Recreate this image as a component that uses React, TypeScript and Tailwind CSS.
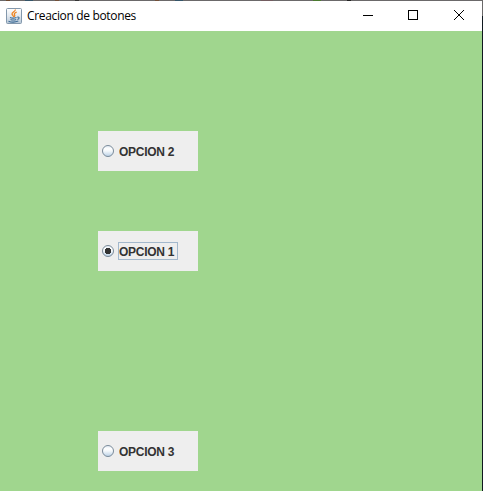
import React from "react";

function JavaIcon() {
  return (
    <svg width="16" height="16" viewBox="0 0 16 16" className="shrink-0">
      <defs>
        <linearGradient id="tile" x1="0" y1="0" x2="0" y2="1">
          <stop offset="0" stopColor="#ffffff" />
          <stop offset="0.5" stopColor="#e3e9ef" />
          <stop offset="1" stopColor="#b4c5d5" />
        </linearGradient>
      </defs>
      <rect x="0.5" y="0.5" width="15" height="15" rx="1" fill="url(#tile)" stroke="#8398ac" />
      <path d="M9.300 1.500c.4 2-3.700 2.500-3.300 4.700.2 1 1.500 1.400 1.700 2.600M10.700 4C8.700 4.900 7.700 5.800 8.600 6.900c.5.700.2 1.300-.4 1.900" fill="none" stroke="#ee8422" strokeWidth="1.300" />
      <path d="M4 9.500c1.500.7 4.500.7 6.500 0M4.500 11.400c1.700.7 4 .7 5.700 0M2.500 13.200c2.800 1.100 7 1 9.800-.2M11.200 9.200c2.500-.8 2.500 1.700.2 2.300" fill="none" stroke="#3f6d97" strokeWidth="1.100" />
    </svg>
  );
}

function Radio({ checked, id }: { checked: boolean; id: string }) {
  return (
    <svg width="12" height="12" viewBox="0 0 12 12" className="shrink-0">
      <defs>
        <linearGradient id={id} x1="0" y1="0" x2="0" y2="1">
          <stop offset="0" stopColor="#dfe9f3" />
          <stop offset="0.3" stopColor="#ffffff" />
          <stop offset="0.5" stopColor="#f4f8fb" />
          <stop offset="1" stopColor="#b8cfe5" />
        </linearGradient>
      </defs>
      <circle cx="6" cy="6" r="5.5" fill={`url(#${id})`} stroke="#7a8a99" />
      {checked && <path d="M4 3h4v1h1v4H8v1H4V8H3V4h1z" fill="#333333" />}
    </svg>
  );
}

function Option({ label, checked = false, id }: { label: string; checked?: boolean; id: string }) {
  return (
    <div className="flex h-10 w-[100px] items-center bg-[#eeeeee] pl-1">
      <Radio checked={checked} id={id} />
      <span
        className={`ml-1 flex h-[18px] w-[60px] items-center border whitespace-nowrap text-[12px] leading-[16px] font-bold text-[#333333] ${
          checked ? "border-[#a3b8cc]" : "border-transparent"
        }`}
      >
        <span className="pt-px tracking-[-0.27px]">{label}</span>
      </span>
    </div>
  );
}

export default function App() {
  return (
    <div className="flex h-[491px] w-[483px] flex-col overflow-hidden font-['Liberation_Sans',Arial,sans-serif]">
      <div className="flex h-px shrink-0 bg-[#6b696a]">
        <i className="ml-1.5 h-px w-1 bg-[#6b4a30]" />
        <i className="ml-[15px] h-px w-2 bg-[#355569]" />
        <i className="ml-[22px] h-px w-1 bg-[#735039]" />
        <i className="ml-4 h-px w-1 bg-[#343434]" />
        <i className="ml-[76px] h-px w-1 bg-[#735039]" />
        <i className="ml-[16px] h-px w-2 bg-[#355569]" />
        <i className="ml-[78px] h-px w-3 bg-[#735c60]" />
        <i className="ml-[40px] h-px w-2 bg-[#4b7a30]" />
        <i className="ml-[26px] h-px w-1 bg-[#232323]" />
      </div>
      <div className="flex flex-1">
        <div className="flex w-[482px] flex-col">
          <header className="flex h-[30px] items-center bg-white pl-1.5">
            <JavaIcon />
            <h1 className="ml-[5px] w-[320px] whitespace-nowrap font-['Open_Sans','Noto_Sans',sans-serif] text-[12px] leading-[16px] tracking-[-0.34px] text-black">
              Creacion de botones
            </h1>
            <svg width="135" height="30" viewBox="0 0 135 30" className="shrink-0" fill="none" stroke="#000">
              <path d="M16 14.500h10" />
              <rect x="61.500" y="9.500" width="9" height="9" />
              <path d="M107 9l10 10M117 9l-10 10" strokeWidth="1" />
            </svg>
          </header>
          <main className="flex flex-1 flex-col bg-[#a0d68e] pt-[100px] pl-[98px]">
            <Option label="OPCION 2" id="r2" />
            <div className="h-[60px]" />
            <Option label="OPCION 1" checked id="r1" />
            <div className="h-[160px]" />
            <Option label="OPCION 3" id="r3" />
          </main>
        </div>
        <div className="flex w-px flex-col bg-[#101820]">
          <div className="h-[15px] bg-[#6b696a]" />
        </div>
      </div>
    </div>
  );
}
